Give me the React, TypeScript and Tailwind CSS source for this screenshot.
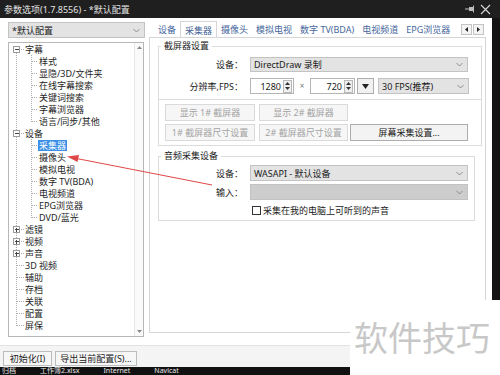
import React from "react";

type Row = {
  text: string;
  level: 0 | 1;
  box?: "-" | "+";
  first?: boolean;
  last?: boolean;
  lastChild?: boolean;
  selected?: boolean;
};

const tree: { text: string; box?: "-" | "+"; children?: string[] }[] = [
  { text: "字幕", box: "-", children: ["样式", "显隐/3D/文件夹", "在线字幕搜索", "关键词搜索", "字幕浏览器", "语言/同步/其他"] },
  { text: "设备", box: "-", children: ["采集器", "摄像头", "模拟电视", "数字 TV(BDA)", "电视频道", "EPG浏览器", "DVD/蓝光"] },
  { text: "滤镜", box: "+" },
  { text: "视频", box: "+" },
  { text: "声音", box: "+" },
  { text: "3D 视频" },
  { text: "辅助" },
  { text: "存档" },
  { text: "关联" },
  { text: "配置" },
  { text: "屏保" },
];

const rows: Row[] = [];
tree.forEach((node, i) => {
  rows.push({ text: node.text, level: 0, box: node.box, first: i === 0, last: i === tree.length - 1 });
  node.children?.forEach((c, j) => {
    rows.push({ text: c, level: 1, lastChild: j === node.children!.length - 1, selected: c === "采集器" });
  });
});

const dot = { stroke: "#adadad", strokeDasharray: "1 1" };

function Guide({ row }: { row: Row }) {
  return (
    <svg width={row.level === 0 ? 15 : 29} height={12} className="shrink-0" shapeRendering="crispEdges">
      <line x1={7.5} x2={7.5} y1={row.first ? 6 : 0} y2={row.last ? 6.5 : 12} {...dot} />
      {row.level === 0 ? (
        <>
          <line x1={8} x2={15} y1={6.5} y2={6.5} {...dot} />
          {row.box && (
            <>
              <rect x={4.5} y={3.5} width={6} height={6} fill="#fff" stroke="#9c9c9c" />
              <line x1={6} x2={10} y1={6.5} y2={6.5} stroke="#444" />
              {row.box === "+" && <line x1={7.5} x2={7.5} y1={5} y2={9} stroke="#444" />}
            </>
          )}
        </>
      ) : (
        <>
          <line x1={22.5} x2={22.5} y1={0} y2={row.lastChild ? 6.5 : 12} {...dot} />
          <line x1={23} x2={29} y1={6.5} y2={6.5} {...dot} />
        </>
      )}
    </svg>
  );
}

function Chevron() {
  return (
    <svg width={7} height={5} viewBox="0 0 7 5">
      <polyline points="0.5,1 3.5,4 6.5,1" fill="none" stroke="#7a7a7a" strokeWidth={0.8} />
    </svg>
  );
}

function Select({ value, className, disabled }: { value: string; className: string; disabled?: boolean }) {
  return (
    <div
      className={`flex items-center justify-between border pl-[3px] pr-[4px] ${
        disabled ? "border-[#c2c2c2] bg-[#cdcdcd]" : "border-[#c3c3c3] bg-[#e3e3e3]"
      } ${className}`}
    >
      <span className="whitespace-nowrap text-[9px] leading-none text-[#1a1a1a]">{value}</span>
      <Chevron />
    </div>
  );
}

function Spin() {
  return (
    <div className="flex h-[13px] w-[9px] flex-col items-center justify-around border border-[#b9b9b9] bg-[#efefef]">
      <svg width={5} height={3}><polygon points="2.5,0 5,3 0,3" fill="#333" /></svg>
      <svg width={5} height={3}><polygon points="0,0 5,0 2.5,3" fill="#333" /></svg>
    </div>
  );
}

function NumInput({ value, className }: { value: string; className: string }) {
  return (
    <div className={`flex h-[16px] items-center justify-end gap-[2px] border border-[#b5b5b5] bg-white pr-[1px] ${className}`}>
      <span className="text-[9px] leading-none text-[#1a1a1a]">{value}</span>
      <Spin />
    </div>
  );
}

function Btn({ label, className, enabled }: { label: string; className: string; enabled?: boolean }) {
  return (
    <div
      className={`flex h-[17px] items-center justify-center whitespace-nowrap border text-[9px] leading-none ${
        enabled ? "border-[#adadad] bg-[#f3f3f3] text-[#1a1a1a]" : "border-[#dadada] bg-[#f6f6f6] text-[#a3a3a3]"
      } ${className}`}
    >
      {label}
    </div>
  );
}

function Label({ text }: { text: string }) {
  return <div className="w-[86px] shrink-0 whitespace-nowrap pr-[2px] text-right text-[9px] leading-none text-[#1a1a1a]">{text}</div>;
}

const tabs = ["设备", "采集器", "摄像头", "模拟电视", "数字 TV(BDA)", "电视频道", "EPG浏览器"];

export default function App() {
  return (
    <div className="relative h-[375px] w-[500px] overflow-hidden bg-[#1b1b1b] font-['Noto_Sans','Noto_Sans_CJK_SC',sans-serif]">
      {/* title bar */}
      <div className="flex h-[18px] items-center justify-between bg-[#1f1f1f] pl-[4px] pr-[9px]">
        <span className="text-[9px] leading-none text-[#e4e4e4]">参数选项(1.7.8556) - *默认配置</span>
        <div className="flex items-center gap-[5px]">
          <svg width={10} height={8} viewBox="0 0 10 8">
            <line x1={0} y1={4} x2={4} y2={4} stroke="#bdbdbd" />
            <rect x={4} y={2} width={4} height={4} fill="#bdbdbd" />
            <line x1={8.5} y1={0.5} x2={8.5} y2={7.5} stroke="#bdbdbd" />
          </svg>
          <svg width={11} height={11} viewBox="0 0 11 11">
            <path d="M1 1 L10 10 M10 1 L1 10" stroke="#d9d9d9" strokeWidth={1.1} />
          </svg>
        </div>
      </div>

      <div className="flex h-[349px]">
        {/* window */}
        <div className="flex w-[492px] flex-col bg-white">
          <div className="flex h-[327px]">
            {/* left column */}
            <div className="flex w-[145px] shrink-0 flex-col pl-[8px] pt-[4px]">
              <Select value="*默认配置" className="h-[16px] w-[137px]" />
              <div className="mt-[4px] flex h-[295px] w-[136px] border border-[#b7b7b7] bg-white">
                <div className="flex flex-1 flex-col overflow-hidden">
                  {rows.map((r, i) => (
                    <div key={i} className="flex h-[12px] shrink-0 items-center">
                      <Guide row={r} />
                      <span
                        className={`whitespace-nowrap px-[1px] text-[9px] leading-[11px] ${
                          r.selected ? "bg-[#3a8ee6] text-white" : "text-[#1e1e1e]"
                        }`}
                      >
                        {r.text}
                      </span>
                    </div>
                  ))}
                </div>
                <div className="flex w-[9px] shrink-0 flex-col items-center justify-between border-l border-[#e6e6e6] bg-[#fafafa] py-[3px]">
                  <svg width={5} height={3}><polygon points="2.5,0 5,3 0,3" fill="#8a8a8a" /></svg>
                  <svg width={5} height={3}><polygon points="0,0 5,0 2.5,3" fill="#8a8a8a" /></svg>
                </div>
              </div>
            </div>

            {/* right column */}
            <div className="ml-[4px] flex w-[337px] flex-col pt-[3px]">
              <div className="flex h-[16px] items-end">
                <div className="flex flex-1 items-end overflow-hidden pl-[5px]">
                  {tabs.map((t) =>
                    t === "采集器" ? (
                      <div
                        key={t}
                        className="relative -mb-px flex h-[17px] shrink-0 items-center whitespace-nowrap border border-b-0 border-[#d6d6d6] bg-white px-[4px] text-[9px] leading-none text-[#3f5f95]"
                      >
                        {t}
                      </div>
                    ) : (
                      <div
                        key={t}
                        className="flex h-[16px] shrink-0 items-center whitespace-nowrap px-[4px] text-[9px] leading-none text-[#46669c]"
                      >
                        {t}
                      </div>
                    )
                  )}
                </div>
                <div className="mb-[2px] mr-[2px] flex shrink-0 gap-[1px]">
                  <div className="flex h-[11px] w-[11px] items-center justify-center border border-[#c4c4c4] bg-[#f4f4f4]">
                    <svg width={3} height={5}><polygon points="3,0 3,5 0,2.5" fill="#222" /></svg>
                  </div>
                  <div className="flex h-[11px] w-[11px] items-center justify-center border border-[#c4c4c4] bg-[#f4f4f4]">
                    <svg width={3} height={5}><polygon points="0,0 0,5 3,2.5" fill="#222" /></svg>
                  </div>
                </div>
              </div>

              <div className="flex h-[296px] flex-col border border-[#d6d6d6] bg-white">
                {/* screen capture group */}
                <fieldset className="ml-[8px] mt-[3px] w-[324px] border border-[#dcdcdc] pb-[4px]">
                  <legend className="ml-[2px] px-[3px] text-[9px] leading-[10px] text-[#1a1a1a]">截屏器设置</legend>
                  <div className="mt-[6px] flex items-center gap-[5px]">
                    <Label text="设备：" />
                    <Select value="DirectDraw 录制" className="h-[15px] w-[218px]" />
                  </div>
                  <div className="mt-[6px] flex items-center gap-[5px]">
                    <Label text="分辨率,FPS：" />
                    <div className="flex items-center">
                      <NumInput value="1280" className="w-[44px]" />
                      <span className="w-[16px] text-center text-[8px] leading-none text-[#777]">×</span>
                      <NumInput value="720" className="w-[45px]" />
                      <div className="ml-[2px] flex h-[16px] w-[17px] items-center justify-center border border-[#adadad] bg-[#f1f1f1]">
                        <svg width={7} height={5}><polygon points="0,0 7,0 3.5,5" fill="#222" /></svg>
                      </div>
                      <Select value="30 FPS(推荐)" className="ml-[4px] h-[16px] w-[91px]" />
                    </div>
                  </div>
                  <div className="mt-[5px] border-t border-[#dcdcdc]" />
                  <div className="mt-[4px] flex gap-[4px] pl-[6px]">
                    <Btn label="显示 1# 截屏器" className="w-[90px]" />
                    <Btn label="显示 2# 截屏器" className="w-[89px]" />
                  </div>
                  <div className="mt-[3px] flex pl-[6px]">
                    <Btn label="1# 截屏器尺寸设置" className="w-[90px]" />
                    <Btn label="2# 截屏器尺寸设置" className="ml-[4px] w-[89px]" />
                    <Btn label="屏幕采集设置..." className="ml-[2px] w-[118px]" enabled />
                  </div>
                </fieldset>

                {/* audio group */}
                <fieldset className="ml-[8px] mt-[5px] w-[317px] border border-[#dcdcdc] pb-[5px]">
                  <legend className="ml-[2px] px-[3px] text-[9px] leading-[10px] text-[#1a1a1a]">音频采集设备</legend>
                  <div className="mt-[4px] flex items-center gap-[5px]">
                    <Label text="设备：" />
                    <Select value="WASAPI - 默认设备" className="h-[16px] w-[218px]" />
                  </div>
                  <div className="mt-[3px] flex items-center gap-[5px]">
                    <Label text="输入：" />
                    <Select value="" className="h-[16px] w-[218px]" disabled />
                  </div>
                  <div className="mt-[6px] flex items-center gap-[2px] pl-[93px]">
                    <div className="h-[9px] w-[9px] border border-[#333] bg-white" />
                    <span className="text-[9px] leading-none text-[#1a1a1a]">采集在我的电脑上可听到的声音</span>
                  </div>
                </fieldset>
              </div>
            </div>
          </div>

          {/* bottom buttons */}
          <div className="flex h-[22px] gap-[3px] border-t border-[#e2e2e2] bg-[#f4f4f4] pl-[3px] pt-[5px]">
            <div className="flex h-[15px] w-[49px] items-center justify-center whitespace-nowrap border border-[#bcbcbc] bg-[#f7f7f7] text-[9px] leading-none text-[#1a1a1a]">
              初始化(I)
            </div>
            <div className="flex h-[15px] w-[82px] items-center justify-center whitespace-nowrap border border-[#bcbcbc] bg-[#f7f7f7] text-[9px] leading-none text-[#1a1a1a]">
              导出当前配置(S)...
            </div>
          </div>
        </div>
        <div className="w-[8px] bg-[#141414]" />
      </div>

      {/* taskbar strip */}
      <div className="flex h-[8px] items-center gap-[24px] overflow-hidden bg-[#111] pl-[2px] text-[7px] leading-[8px] text-[#e8e8e8]">
        <span>归档</span>
        <span>工作簿2.xlsx</span>
        <span>Internet</span>
        <span>Navicat</span>
      </div>

      {/* annotation arrow */}
      <svg className="pointer-events-none absolute left-0 top-0" width={500} height={375}>
        <line x1={212} y1={185} x2={74} y2={158} stroke="#e04848" strokeWidth={1} />
        <polygon points="67,156.5 79,155 77.5,162" fill="#e04848" />
      </svg>

      {/* watermark */}
      <div className="absolute left-[350px] top-[300px] flex h-[75px] w-[150px] items-center bg-white pl-[4px]">
        <span className="text-[34px] leading-none text-[#c8c8c8]">软件技巧</span>
      </div>
    </div>
  );
}
